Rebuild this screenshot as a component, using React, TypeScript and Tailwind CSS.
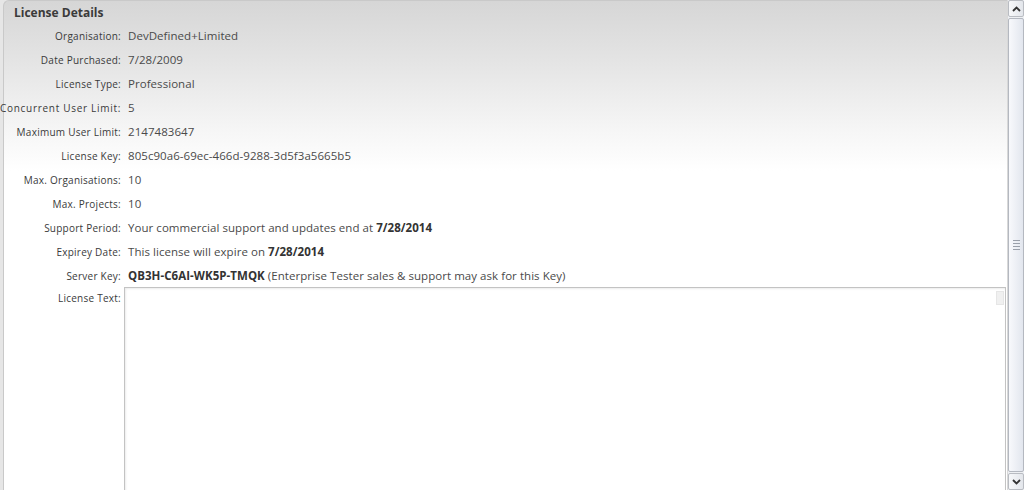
import React from "react";

const rows: { label: string; value: React.ReactNode; wide?: boolean }[] = [
  { label: "Organisation:", value: "DevDefined+Limited" },
  { label: "Date Purchased:", value: "7/28/2009" },
  { label: "License Type:", value: "Professional" },
  { label: "Concurrent User Limit:", value: "5", wide: true },
  { label: "Maximum User Limit:", value: "2147483647" },
  { label: "License Key:", value: "805c90a6-69ec-466d-9288-3d5f3a5665b5" },
  { label: "Max. Organisations:", value: "10" },
  { label: "Max. Projects:", value: "10" },
  {
    label: "Support Period:",
    value: (
      <>
        Your commercial support and updates end at <b className="font-bold text-[#333]">7/28/2014</b>
      </>
    ),
  },
  {
    label: "Expirey Date:",
    value: (
      <>
        This license will expire on <b className="font-bold text-[#333]">7/28/2014</b>
      </>
    ),
  },
  {
    label: "Server Key:",
    value: (
      <>
        <b className="font-bold text-[#333]">QB3H-C6AI-WK5P-TMQK</b> (Enterprise Tester sales &amp; support may ask for this Key)
      </>
    ),
  },
];

function Scrollbar() {
  return (
    <div className="w-[17px] h-full flex flex-col bg-[#eef0f3] border-l border-[#d8d8d8]">
      {/* up arrow */}
      <div className="h-[17px] flex items-center justify-center border border-[#b9bcc2] rounded-[2px] bg-[linear-gradient(to_right,#f7f8fa,#e3e6eb)]">
        <svg width="9" height="6" viewBox="0 0 9 6">
          <path d="M1 5 L4.5 1.5 L8 5" stroke="#333" strokeWidth="1.8" fill="none" />
        </svg>
      </div>
      {/* thumb */}
      <div className="flex-1 my-[1px] border border-[#b4b8c0] rounded-[2px] bg-[linear-gradient(to_right,#f8f9fc,#e2e6ee)] flex flex-col items-center justify-center gap-[2px]">
        <div className="w-[7px] h-px bg-[#9aa0aa]" />
        <div className="w-[7px] h-px bg-[#9aa0aa]" />
        <div className="w-[7px] h-px bg-[#9aa0aa]" />
        <div className="w-[7px] h-px bg-[#9aa0aa]" />
      </div>
      {/* down arrow */}
      <div className="h-[17px] flex items-center justify-center border border-[#b9bcc2] rounded-[2px] bg-[linear-gradient(to_right,#f7f8fa,#e3e6eb)]">
        <svg width="9" height="6" viewBox="0 0 9 6">
          <path d="M1 1 L4.5 4.5 L8 1" stroke="#333" strokeWidth="1.8" fill="none" />
        </svg>
      </div>
    </div>
  );
}

export default function App() {
  return (
    <div className="w-[1024px] h-[490px] flex overflow-hidden bg-white font-['Open_Sans',_'DejaVu_Sans',_sans-serif]">
      <div className="flex-1 h-full pl-[3px] bg-[#e6e6e6]">
        <div className="h-full rounded-tl-[6px] border-l border-t border-[#c9c9c9] bg-[linear-gradient(to_bottom,#d6d6d6_0px,#e4e4e4_60px,#f6f6f6_130px,#ffffff_170px)] pr-[1px]">
          {/* heading */}
          <div className="h-[23px] flex items-center pl-[10px] text-[12px] font-bold text-[#3b3b3b]">
            License Details
          </div>

          {/* rows */}
          <div className="flex flex-col -ml-[4px]">
            {rows.map((r) => (
              <div key={r.label} className="h-[24px] flex items-center">
                <div
                  className={
                    r.wide
                      ? "w-[121px] text-right text-[10px] tracking-[0.7px] text-[#3a3a3a] whitespace-nowrap"
                      : "w-[121px] text-right text-[10px] tracking-[0.25px] text-[#3a3a3a] whitespace-nowrap"
                  }
                >
                  {r.label}
                </div>
                <div className="ml-[7px] text-[11.5px] tracking-[0.05px] text-[#4a4a4a] whitespace-nowrap">{r.value}</div>
              </div>
            ))}

            {/* license text */}
            <div className="flex items-start -mt-[1px]">
              <div className="w-[121px] pt-[4px] text-right text-[10px] tracking-[0.25px] text-[#3a3a3a]">License Text:</div>
              <div className="ml-[3px] flex-1 h-[220px] border border-[#c3c3c3] bg-white shadow-[inset_1px_1px_2px_rgba(0,0,0,0.08)] flex justify-end">
                <div className="w-[8px] h-[14px] mt-[3px] mr-[1px] bg-[#f0f0f0] border border-[#e6e6e6]" />
              </div>
            </div>
          </div>
        </div>
      </div>
      <Scrollbar />
    </div>
  );
}
